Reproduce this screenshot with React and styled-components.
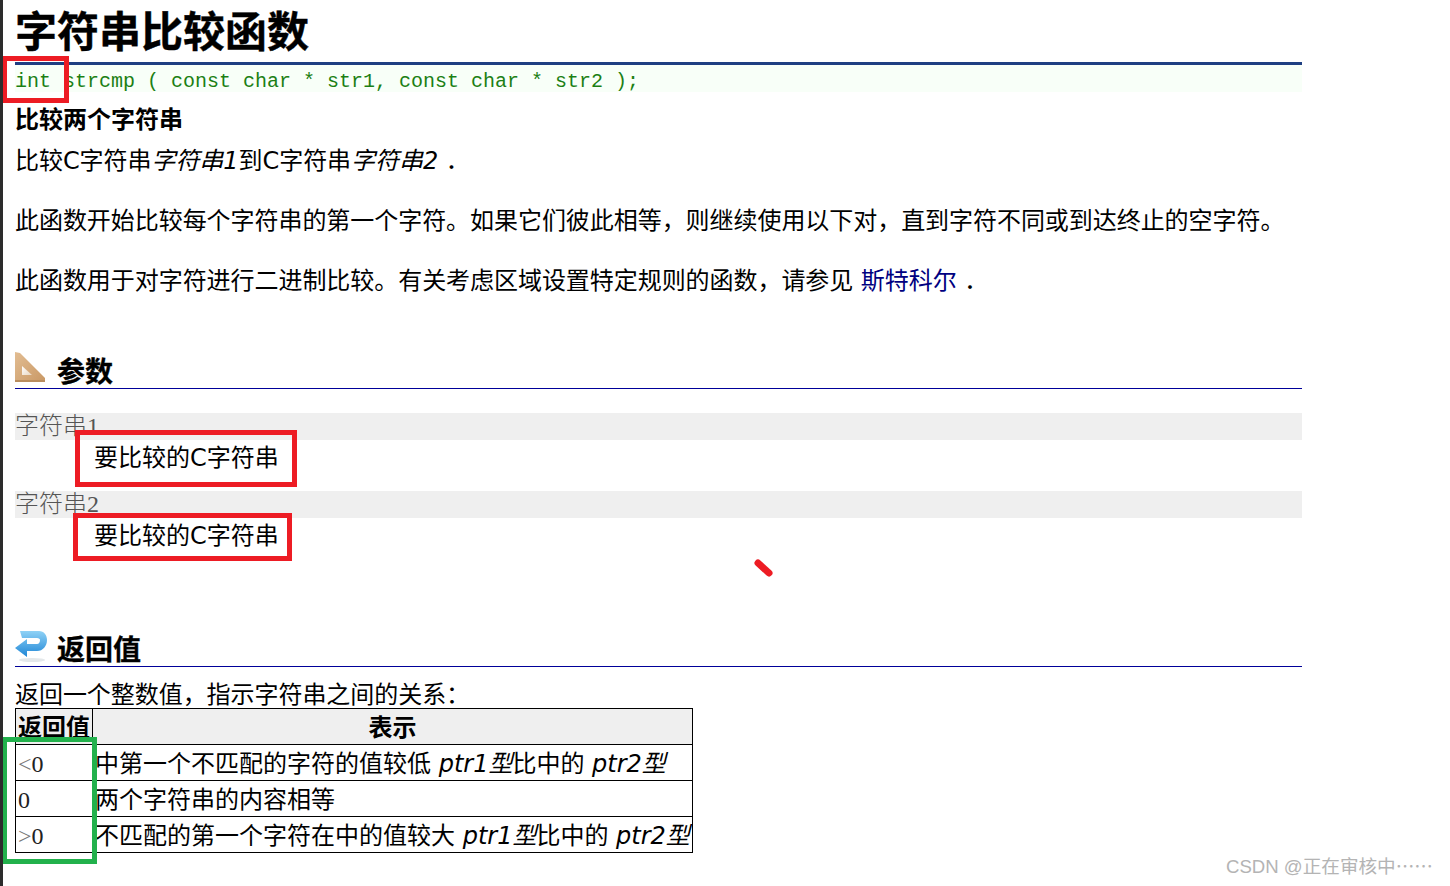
import React from "react";
import styled, { createGlobalStyle } from "styled-components";

const SANS = `"DejaVu Sans", "Noto Sans CJK SC", sans-serif`;
const SERIF = `"Liberation Serif", "Noto Sans CJK SC", serif`;

const Global = createGlobalStyle`
  html, body { margin: 0; padding: 0; background: #fff; }
  body { font-family: ${SANS}; color: #000; overflow: hidden; }
`;

const Page = styled.div`
  position: relative;
  box-sizing: border-box;
  width: 1450px;
  height: 886px;
  overflow: hidden;
  border-left: 3px solid #2c2c2c;
  padding-left: 12px;
`;

const Article = styled.main`
  width: 1287px;
`;

const Title = styled.h1`
  margin: 0;
  padding-top: 8px;
  height: 56px;
  box-sizing: border-box;
  font-size: 42px;
  line-height: 50px;
  font-weight: 700;
  -webkit-text-stroke: 0.4px #000;
`;

const TitleRule = styled.div`
  height: 3px;
  background: #1f3f82;
  margin-top: 6px;
`;

const CodeLine = styled.div`
  height: 27px;
  background: #f8fff8;
  font-family: "Liberation Mono", monospace;
  font-size: 20px;
  line-height: 33px;
  color: #1c7f14;
  white-space: pre;
`;

const Summary = styled.div`
  margin-top: 10px;
  font-size: 24px;
  line-height: 36px;
  font-weight: 700;
`;

const Para = styled.p`
  margin: ${(p) => (p.$first ? "5px" : "24px")} 0 0;
  font-size: 24px;
  line-height: 36px;
  letter-spacing: -0.05px;
  white-space: nowrap;
`;

const LinkText = styled.span`
  color: #000080;
`;

const SectionHead = styled.h2`
  display: flex;
  align-items: flex-end;
  gap: 10px;
  margin: ${(p) => p.$top} 0 0;
  height: 37px;
  box-sizing: border-box;
  border-bottom: 1px solid #000099;
  font-size: 28px;
  line-height: 30px;
  font-weight: 700;
  -webkit-text-stroke: 0.3px #000;
`;

const IconSlot = styled.span`
  display: flex;
  width: 32px;
  align-self: flex-start;
`;

const ParamName = styled.div`
  margin-top: ${(p) => p.$top};
  height: 27px;
  background: #efefef;
  font-family: ${SERIF};
  font-size: 24px;
  line-height: 27px;
  font-weight: 300;
  color: #555;
`;

const ParamDesc = styled.div`
  padding-left: 79px;
  font-size: 24px;
  line-height: 36px;
`;

const Intro = styled.div`
  margin-top: 10px;
  height: 31px;
  font-size: 24px;
  line-height: 36px;
  letter-spacing: -0.05px;
`;

const Table = styled.table`
  border-collapse: collapse;
  table-layout: fixed;
  width: 678px;
  font-size: 24px;
`;

const Head = styled.th`
  background: #efefef;
  border: 1px solid #000;
  padding: 4px 0 0;
  height: 31px;
  line-height: 31px;
  font-weight: 700;
  width: ${(p) => p.$w || "auto"};
  text-align: center;
  overflow: hidden;
  white-space: nowrap;
`;

const Cell = styled.td`
  border: 1px solid #000;
  padding: 4px 0 0 2px;
  height: 31px;
  line-height: 31px;
  white-space: nowrap;
  overflow: hidden;
`;

const ValueCell = styled(Cell)`
  font-family: ${SERIF};
  color: #222;
`;

const Sign = styled.span`
  color: #777;
`;

const Mark = styled.div`
  position: absolute;
  box-sizing: border-box;
  left: ${(p) => p.$x}px;
  top: ${(p) => p.$y}px;
  width: ${(p) => p.$w}px;
  height: ${(p) => p.$h}px;
  border: 5px solid ${(p) => p.$color};
  pointer-events: none;
`;

const Stroke = styled.svg`
  position: absolute;
  left: 750px;
  top: 556px;
`;

const Watermark = styled.div`
  position: absolute;
  left: 1223px;
  top: 850px;
  font-family: "Liberation Sans", "Noto Sans CJK SC", sans-serif;
  font-size: 18.6px;
  line-height: 30px;
  color: #b4b4b4;
  white-space: nowrap;
`;

const Dots = styled.span`
  font-family: "Noto Sans CJK SC", sans-serif;
`;

const SetSquare = () => (
  <svg width="32" height="32" viewBox="0 0 32 32">
    <defs>
      <linearGradient id="sq" x1="0" y1="0" x2="1" y2="1">
        <stop offset="0" stopColor="#e2bd92" />
        <stop offset="1" stopColor="#c99865" />
      </linearGradient>
      <linearGradient id="sqh" x1="0" y1="0" x2="1" y2="1">
        <stop offset="0" stopColor="#fff" />
        <stop offset="1" stopColor="#e8d6c0" />
      </linearGradient>
    </defs>
    <path d="M0 0 L5 1 L30 26 L30 30 L0 30 Z" fill="url(#sq)" />
    <path d="M7 14 L7 23 L17 23 Z" fill="url(#sqh)" />
    <rect x="0" y="28" width="30" height="2" fill="#b98d5e" />
  </svg>
);

const ReturnArrow = () => (
  <svg width="32" height="32" viewBox="0 0 32 32">
    <defs>
      <linearGradient id="ar" x1="0" y1="0" x2="0" y2="1">
        <stop offset="0" stopColor="#8fd2f6" />
        <stop offset="1" stopColor="#1f86d6" />
      </linearGradient>
    </defs>
    <path
      d="M5 1 H24 C29 1 32 5 32 10 C32 16 28 21 22 21 H12 V27 L0 18 L12 9 V14 H22 C24 14 25 12 25 10 C25 9 24 8 22 8 H7 Z"
      fill="url(#ar)"
    />
    <ellipse cx="17" cy="30" rx="13" ry="2" fill="#e4e8ea" />
  </svg>
);

export default function App() {
  return (
    <Page>
      <Global />
      <Article>
        <Title>字符串比较函数</Title>
        <TitleRule />
        <CodeLine>int strcmp ( const char * str1, const char * str2 );</CodeLine>
        <Summary>比较两个字符串</Summary>
        <Para $first>
          比较C字符串<i>字符串1</i>到C字符串<i>字符串2</i> ．
        </Para>
        <Para>此函数开始比较每个字符串的第一个字符。如果它们彼此相等，则继续使用以下对，直到字符不同或到达终止的空字符。</Para>
        <Para>
          此函数用于对字符进行二进制比较。有关考虑区域设置特定规则的函数，请参见 <LinkText>斯特科尔</LinkText> ．
        </Para>

        <SectionHead $top="53px">
          <IconSlot><SetSquare /></IconSlot>
          参数
        </SectionHead>
        <ParamName $top="24px">字符串1</ParamName>
        <ParamDesc>要比较的C字符串</ParamDesc>
        <ParamName $top="15px">字符串2</ParamName>
        <ParamDesc>要比较的C字符串</ParamDesc>

        <SectionHead $top="76px">
          <IconSlot><ReturnArrow /></IconSlot>
          返回值
        </SectionHead>
        <Intro>返回一个整数值，指示字符串之间的关系：</Intro>
        <Table>
          <thead>
            <tr>
              <Head $w="76px">返回值</Head>
              <Head>表示</Head>
            </tr>
          </thead>
          <tbody>
            <tr>
              <ValueCell><Sign>&lt;</Sign>0</ValueCell>
              <Cell>中第一个不匹配的字符的值较低 <i>ptr1型</i>比中的 <i>ptr2型</i></Cell>
            </tr>
            <tr>
              <ValueCell>0</ValueCell>
              <Cell>两个字符串的内容相等</Cell>
            </tr>
            <tr>
              <ValueCell><Sign>&gt;</Sign>0</ValueCell>
              <Cell>不匹配的第一个字符在中的值较大 <i>ptr1型</i>比中的 <i>ptr2型</i></Cell>
            </tr>
          </tbody>
        </Table>
      </Article>

      <Mark $color="#ed1c24" $x={-1} $y={56} $w={67} $h={47} />
      <Mark $color="#ed1c24" $x={72} $y={430} $w={222} $h={57} />
      <Mark $color="#ed1c24" $x={70} $y={513} $w={219} $h={48} />
      <Mark $color="#22b14c" $x={-1} $y={737} $w={95} $h={127} />
      <Stroke width="26" height="26" viewBox="0 0 26 26">
        <line x1="5" y1="7" x2="16" y2="17" stroke="#ed1c24" strokeWidth="7" strokeLinecap="round" />
      </Stroke>
      <Watermark>CSDN @正在审核中<Dots>……</Dots></Watermark>
    </Page>
  );
}
